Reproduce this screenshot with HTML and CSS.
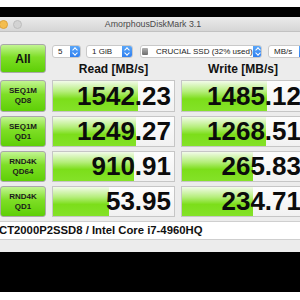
FILE: index.html
```html
<!DOCTYPE html>
<html lang="en">
<head>
    <meta charset="UTF-8">
    <title>AmorphousDiskMark 3.1</title>
    <link rel="stylesheet" href="styles.css">
</head>
<body>

    <div class="screen">
        <div class="window">

            <!-- Barre de titre -->
            <div class="titlebar">
                <span class="light yellow"></span>
                <span class="light grey"></span>
                <span class="title">AmorphousDiskMark 3.1</span>
            </div>

            <div class="content">

                <!-- Boutons et menus -->
                <div class="top">
                    <div class="all">All</div>
                    <div class="selects">
                        <div class="select s-count"><span class="val">5</span><span class="step"></span></div>
                        <div class="select s-size"><span class="val">1 GiB</span><span class="step"></span></div>
                        <div class="select s-drive"><span class="disk"></span><span class="val">CRUCIAL SSD (32% used)</span><span class="step"></span></div>
                        <div class="select s-unit"><span class="val">MB/s</span><span class="step"></span></div>
                    </div>
                    <div class="head">Read [MB/s]</div>
                    <div class="head">Write [MB/s]</div>
                </div>

                <!-- Resultats -->
                <div class="results">
                    <div class="label">SEQ1M<br>QD8</div>
                    <div class="box"><div class="bar" style="width: 70%"></div><span class="num">1542.23</span></div>
                    <div class="box"><div class="bar" style="width: 70%"></div><span class="num">1485.12</span></div>

                    <div class="label">SEQ1M<br>QD1</div>
                    <div class="box"><div class="bar" style="width: 69%"></div><span class="num">1249.27</span></div>
                    <div class="box"><div class="bar" style="width: 69%"></div><span class="num">1268.51</span></div>

                    <div class="label">RND4K<br>QD64</div>
                    <div class="box"><div class="bar" style="width: 67%"></div><span class="num">910.91</span></div>
                    <div class="box"><div class="bar" style="width: 58%"></div><span class="num">265.83</span></div>

                    <div class="label">RND4K<br>QD1</div>
                    <div class="box"><div class="bar" style="width: 46%"></div><span class="num">53.95</span></div>
                    <div class="box"><div class="bar" style="width: 58%"></div><span class="num">234.71</span></div>
                </div>

                <div class="comment">CT2000P2SSD8 / Intel Core i7-4960HQ</div>
            </div>
        </div>
    </div>

</body>
</html>
```

FILE: styles.css
```css
body {
    margin: 0;
    width: 300px;
    height: 300px;
    overflow: hidden;
    background-color: #fff;
    font-family: "Liberation Sans", Arial, sans-serif;
    color: #111;
}
.screen {
    margin-top: 7px;
    background-color: #000;
    padding: 10px 0 40px 0;
}
.window {
    height: 235px;
    background-color: #ececec;
    overflow: hidden;
}
.titlebar {
    height: 14px;
    border-bottom: 1px solid #c2c2c2;
    background: linear-gradient(#ebebeb, #d6d6d6);
    display: flex;
    align-items: center;
}
.light {
    width: 7px;
    height: 7px;
    border-radius: 50%;
    margin-left: 5px;
    flex: none;
}
.yellow {
    background-color: #f4bd4f;
    border: 0.5px solid #dca23a;
    margin-left: -1px;
}
.grey {
    background-color: #d3d3d3;
    border: 0.5px solid #bdbdbd;
}
.title {
    flex: 1;
    text-align: center;
    font-size: 8.8px;
    color: #4a4a4a;
    margin-right: 16px;
}
.content {
    padding-top: 12px;
}
.top {
    display: grid;
    grid-template-columns: 46px 123px 124px;
    grid-template-rows: 14px 22px;
    column-gap: 6px;
}
.all {
    grid-row: 1 / span 2;
    height: 27px;
    border: 1px solid #a9a9a9;
    border-radius: 3px;
    background: linear-gradient(#c3f593, #7ede26 45%, #5ecf06);
    font-size: 12px;
    font-weight: bold;
    display: flex;
    align-items: center;
    justify-content: center;
}
.selects {
    grid-column: 2 / span 2;
    display: flex;
    align-items: flex-start;
    padding-top: 1px;
}
.select {
    height: 11px;
    border: 1px solid #c9c9c9;
    border-radius: 3px;
    background-color: #fff;
    display: flex;
    align-items: center;
    font-size: 8px;
    color: #222;
    flex: none;
    overflow: hidden;
}
.select .val {
    flex: 1;
    padding-left: 5px;
    white-space: nowrap;
}
.step {
    width: 10px;
    height: 100%;
    background: linear-gradient(#5aa6f8, #2f7ff0);
    position: relative;
}
.step::before,
.step::after {
    content: "";
    position: absolute;
    left: 3px;
    width: 3px;
    height: 3px;
    border-left: 1px solid #fff;
    border-top: 1px solid #fff;
}
.step::before {
    top: 2px;
    transform: rotate(45deg);
}
.step::after {
    top: 5px;
    transform: rotate(225deg);
}
.s-count {
    width: 27px;
}
.s-size {
    width: 45px;
    margin-left: 5px;
}
.s-drive {
    width: 120px;
    margin-left: 7px;
}
.s-drive .val {
    padding-left: 8px;
}
.disk {
    width: 7px;
    height: 7px;
    margin-left: 1px;
    background: linear-gradient(#b0b0b0, #6d6d6d);
    border-radius: 1px;
}
.s-unit {
    width: 40px;
    margin-left: 6px;
}
.head {
    font-size: 12px;
    font-weight: bold;
    text-align: center;
    align-self: center;
}
.results {
    display: grid;
    grid-template-columns: 46px 123px 124px;
    grid-template-rows: 32px 31px 31px 31px;
    column-gap: 6px;
    row-gap: 4px;
}
.label {
    border: 1px solid #a9a9a9;
    border-radius: 3px;
    background: linear-gradient(#c3f593, #7ede26 45%, #5ecf06);
    font-size: 8px;
    font-weight: bold;
    line-height: 10px;
    display: flex;
    align-items: center;
    justify-content: center;
    text-align: center;
    color: #1a1a1a;
}
.box {
    position: relative;
    border: 1px solid #c6c6c6;
    background: linear-gradient(#fdfdfd, #f1f1f1);
    display: flex;
    align-items: center;
    justify-content: flex-end;
}
.bar {
    position: absolute;
    left: 0;
    top: 0;
    bottom: 0;
    background: linear-gradient(#f2fbe9, #b5ee7b 35%, #7cde1a 60%, #84e228);
}
.num {
    position: relative;
    font-size: 26px;
    font-weight: bold;
    padding-right: 3px;
    color: #0c0c0c;
}
.comment {
    margin-top: 4px;
    height: 17px;
    background-color: #fff;
    border-top: 1px solid #cfcfcf;
    border-bottom: 1px solid #cfcfcf;
    font-size: 11.3px;
    font-weight: bold;
    line-height: 17px;
    white-space: nowrap;
    text-indent: -1px;
}
```
